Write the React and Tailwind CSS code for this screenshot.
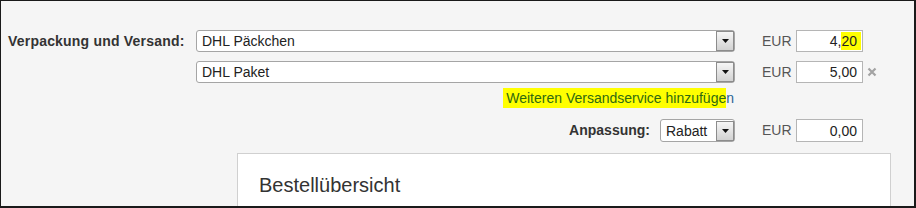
import React from "react";

function Select({ className, text }) {
  return (
    <div className={className}>
      <span className="flex-1 pl-[5px] text-[14px] text-[#222] leading-none whitespace-nowrap">{text}</span>
      <div className="w-[18px] h-[20px] border border-[#8c8c8c] bg-gradient-to-b from-[#f6f6f6] to-[#d2d2d2] flex items-center justify-center">
        <svg width="7" height="4" viewBox="0 0 7 4">
          <polygon points="0,0 7,0 3.5,4" fill="#111" />
        </svg>
      </div>
    </div>
  );
}

function Amount({ children }) {
  return (
    <div className="w-[67px] h-full bg-white border border-[#b5b5b5] flex items-center justify-end pr-[5px] text-[14px] text-[#222] leading-none">
      {children}
    </div>
  );
}

export default function App() {
  return (
    <div className="w-[916px] h-[208px] overflow-hidden bg-[#f5f5f5] border-t border-l border-r-2 border-b-2 border-[#1a1a1a] font-['Liberation_Sans',Arial,sans-serif]">
      <div className="pt-[29px]">
        <div className="flex items-center h-[22px]">
          <div className="w-[195px] pl-[7px] text-[14px] font-bold text-[#333] tracking-[0.2px] whitespace-nowrap">
            Verpackung und Versand:
          </div>
          <Select
            className="w-[539px] h-full flex items-center bg-white border border-[#a5a5a5] rounded-[3px]"
            text="DHL Päckchen"
          />
          <span className="ml-[27px] w-[34px] text-[14px] text-[#555]">EUR</span>
          <div className="w-[67px] h-full bg-white border border-[#b5b5b5] flex items-center justify-end pr-[1px] text-[14px] text-[#222] leading-none">
            4,<span className="bg-[#ffff00] pr-[4px] py-[2px]">20</span>
          </div>
        </div>

        <div className="flex items-center h-[22px] mt-[9px]">
          <div className="w-[195px]" />
          <Select
            className="w-[539px] h-full flex items-center bg-white border border-[#a5a5a5] rounded-[3px]"
            text="DHL Paket"
          />
          <span className="ml-[27px] w-[34px] text-[14px] text-[#555]">EUR</span>
          <Amount>5,00</Amount>
          <svg className="ml-[4px]" width="10" height="10" viewBox="0 0 10 10">
            <path d="M1.5 1.5 L8.5 8.5 M8.5 1.5 L1.5 8.5" stroke="#a3a3a3" strokeWidth="2.2" />
          </svg>
        </div>

        <div className="flex h-[36px] pt-[7px]">
          <div className="w-[195px]" />
          <div className="w-[539px] flex justify-end pr-[1px] text-[14px] leading-[16px] whitespace-nowrap">
            <span>
              <span className="bg-[#ffff00] pl-[3px] py-[2px] text-[#2f6a10]">Weiteren Versandservice hinzufüge</span>
              <span className="text-[#2a6496]">n</span>
            </span>
          </div>
        </div>

        <div className="flex items-center h-[23px]">
          <div className="w-[195px]" />
          <div className="w-[539px] h-full flex items-center justify-end">
            <span className="mr-[10px] text-[14px] font-bold text-[#333]">Anpassung:</span>
            <Select
              className="w-[75px] h-full flex items-center bg-white border border-[#a5a5a5] rounded-[3px]"
              text="Rabatt"
            />
          </div>
          <span className="ml-[27px] w-[34px] text-[14px] text-[#555]">EUR</span>
          <Amount>0,00</Amount>
        </div>

        <div className="mt-[11px] ml-[236px] w-[654px] h-[120px] bg-white border border-[#d0d0d0] pt-[20px] pl-[21px]">
          <div className="text-[20px] leading-[23px] text-[#333]">Bestellübersicht</div>
        </div>
      </div>
    </div>
  );
}
